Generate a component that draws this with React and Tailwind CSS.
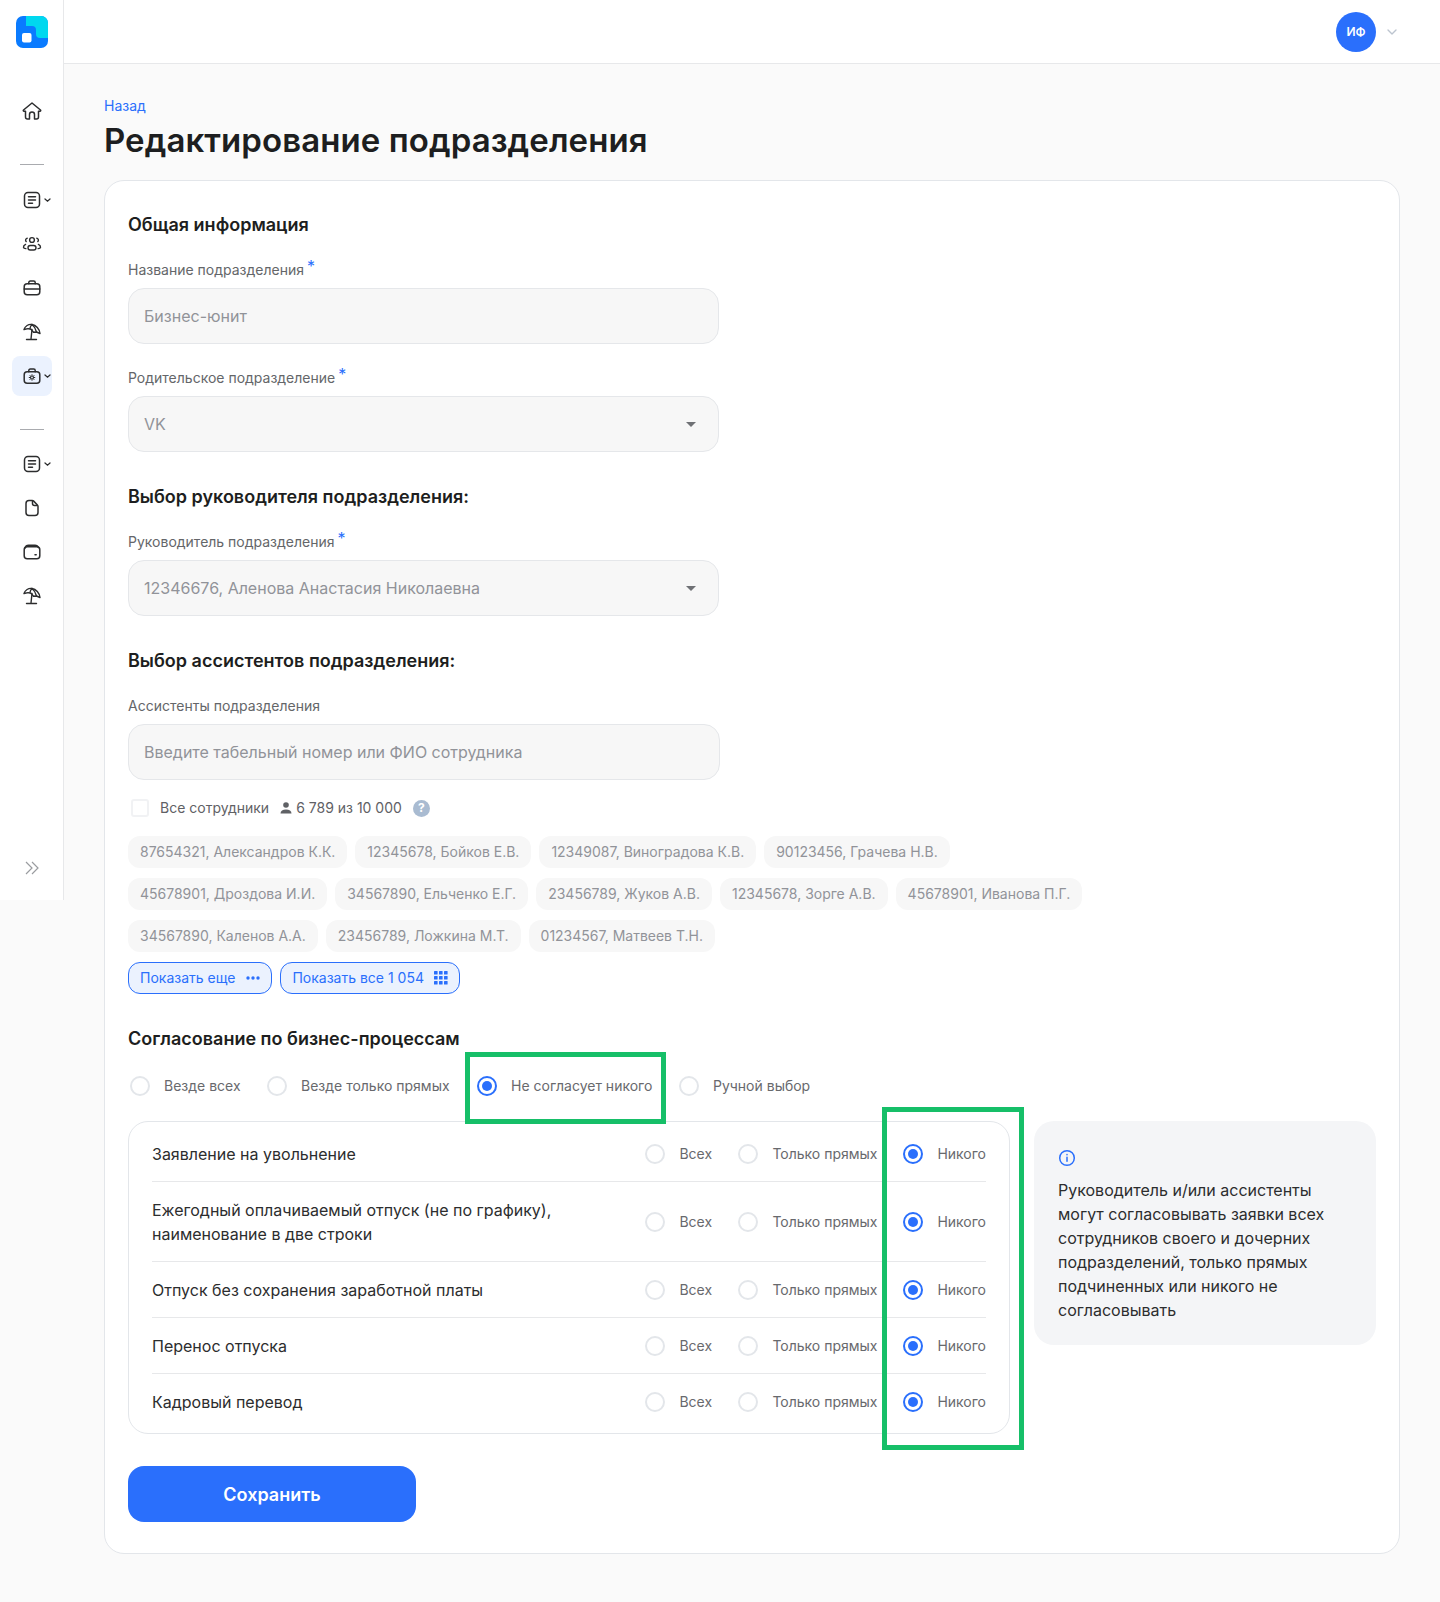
import { ChevronDown } from 'lucide-react';

const font = 'font-["Inter","Liberation_Sans",sans-serif]';

const IconHome = () => (
  <svg width="20" height="20" viewBox="0 0 20 20" fill="none" stroke="#2c2d2e" strokeWidth="1.5" strokeLinejoin="round">
    <path d="M10 2 18.500 9c.5.5.2 1.300-.5 1.300h-1.500V16a2 2 0 0 1-2 2h-2v-4.500a2.500 2.500 0 0 0-5 0V18h-2a2 2 0 0 1-2-2v-5.700H2c-.7 0-1-.8-.5-1.300z" />
  </svg>
);

const IconDoc = () => (
  <svg width="18" height="18" viewBox="0 0 18 18" fill="none" stroke="#2c2d2e" strokeWidth="1.5" strokeLinecap="round">
    <rect x="1.5" y="1.5" width="15" height="15" rx="3.5" />
    <path d="M5.5 5.8h7M5.5 9h7M5.5 12.2h4" />
  </svg>
);

const IconPeople = () => (
  <svg width="20" height="18" viewBox="0 0 20 18" fill="none" stroke="#2c2d2e" strokeWidth="1.4" strokeLinecap="round">
    <circle cx="10" cy="5" r="2.4" />
    <rect x="6" y="10.5" width="8" height="4.5" rx="2.25" />
    <path d="M5.2 3.2a2 2 0 0 0-1 3.4M14.8 3.2a2 2 0 0 1 1 3.4M3.6 9.4C2.2 10 1.4 11 1.5 12.3c.1.8.9 1.2 2.4 1.3M16.4 9.4c1.4.6 2.2 1.6 2.1 2.9-.1.8-.9 1.2-2.4 1.3" />
  </svg>
);

const IconCase = () => (
  <svg width="18" height="18" viewBox="0 0 18 18" fill="none" stroke="#2c2d2e" strokeWidth="1.5" strokeLinecap="round">
    <rect x="1.2" y="4.8" width="15.6" height="11" rx="3" />
    <path d="M5.8 4.8V3.6c0-.9.6-1.6 1.5-1.6h3.4c.9 0 1.5.7 1.5 1.6v1.2M1.2 10h15.6" />
  </svg>
);

const IconUmbrella = () => (
  <svg width="18" height="18" viewBox="0 0 18 18" fill="none" stroke="#2c2d2e" strokeWidth="1.4" strokeLinecap="round" strokeLinejoin="round">
    <path d="M1 6.500C2 3 5.500 1 9 1.500c4 .6 7.500 4.500 8 9l-3.500-1.500-3 .2-2.500-3-3-.6z" />
    <path d="M9 1.500C7.500 3 7 4.500 7 5.600M9 1.500c2.500 2 4 5 4.500 7.500M9 6.500 8 16M3.500 16.500h10" />
  </svg>
);

const IconMedCase = () => (
  <svg width="18" height="18" viewBox="0 0 18 18" fill="none" stroke="#2c2d2e" strokeWidth="1.5" strokeLinecap="round">
    <rect x="1.2" y="4.8" width="15.6" height="11.4" rx="3" />
    <path d="M5.800 4.800V3.600c0-.9.6-1.600 1.500-1.600h3.400c.9 0 1.500.7 1.500 1.600v1.200" />
    <circle cx="9" cy="10.500" r="1.500" strokeWidth="1.200" />
    <path d="M9 7.700v.6M9 12.700v.6M6.200 10.500h.6M11.200 10.500h.6M7 8.500l.4.4M10.600 12.100l.4.4M11 8.500l-.4.4M7.400 12.100l-.4.4" strokeWidth="1" />
  </svg>
);

const IconFile = () => (
  <svg width="18" height="18" viewBox="0 0 18 18" fill="none" stroke="#2c2d2e" strokeWidth="1.5" strokeLinejoin="round">
    <path d="M3 4.500C3 2.800 4.200 1.500 6 1.500h3.200c.6 0 1.100.2 1.500.6l3.700 3.800c.4.4.6.9.6 1.500v6.100c0 1.700-1.200 3-3 3H6c-1.800 0-3-1.300-3-3z" />
    <path d="M9.500 1.800v2.700c0 1.200.8 2 2 2h2.600" />
  </svg>
);

const IconWallet = () => (
  <svg width="18" height="18" viewBox="0 0 18 18" fill="none" stroke="#2c2d2e" strokeWidth="1.5" strokeLinecap="round">
    <rect x="1.200" y="3.800" width="15.600" height="12" rx="3" />
    <path d="M2 5c.5-1.800 1.800-2.800 3.500-2.800h6.500c1.800 0 3 1 3.500 2.400M12 11.800h1.200" />
  </svg>
);

function NavItem({ children, caret, active }) {
  return (
    <div className={`relative flex h-10 w-10 items-center justify-center rounded-lg ${active ? 'bg-[#ebf2fe]' : ''}`}>
      {children}
      {caret && (
        <svg className="absolute right-[1px] top-[17.500px]" width="7" height="5" viewBox="0 0 7 5" fill="none" stroke="#2c2d2e" strokeWidth="1.300" strokeLinecap="round">
          <path d="M1 1l2.500 2.200L6 1" />
        </svg>
      )}
    </div>
  );
}

function Sidebar() {
  return (
    <aside className="flex h-[900px] w-[64px] shrink-0 flex-col items-center border-r border-[#e7e8ea] bg-white">
      <svg className="mt-4" width="32" height="32" viewBox="0 0 32 32">
        <rect width="32" height="32" rx="7" fill="#0a7bff" />
        <path d="M10 0h15a7 7 0 0 1 7 7v15h-8a4 4 0 0 1-4-4v-4a4 4 0 0 0-4-4h-6z" fill="#00d8ef" />
        <rect x="6" y="17" width="9.500" height="9.500" rx="2" fill="#fff" />
      </svg>
      <div className="mt-[43px]">
        <NavItem><IconHome /></NavItem>
      </div>
      <div className="mb-[15px] mt-[33px] h-px w-6 bg-[#a9abaf]" />
      <div className="flex flex-col gap-1">
        <NavItem caret><IconDoc /></NavItem>
        <NavItem><IconPeople /></NavItem>
        <NavItem><IconCase /></NavItem>
        <NavItem><IconUmbrella /></NavItem>
        <NavItem caret active><IconMedCase /></NavItem>
      </div>
      <div className="mb-[14px] mt-[33px] h-px w-6 bg-[#a9abaf]" />
      <div className="flex flex-col gap-1">
        <NavItem caret><IconDoc /></NavItem>
        <NavItem><IconFile /></NavItem>
        <NavItem><IconWallet /></NavItem>
        <NavItem><IconUmbrella /></NavItem>
      </div>
      <svg className="mb-[25px] mt-auto" width="14" height="14" viewBox="0 0 14 14" fill="none" stroke="#9a9ca0" strokeWidth="1.200">
        <path d="M1 1l6 6-6 6M7 1l6 6-6 6" />
      </svg>
    </aside>
  );
}

function Star() {
  return <span className="absolute -right-[11px] -top-[3px] text-base leading-none text-[#2a6ffc]">*</span>;
}

function FieldLabel({ children, required }) {
  return (
    <div className="mb-[9px] text-sm leading-[18px] text-[#646669]">
      <span className="relative">
        {children}
        {required && <Star />}
      </span>
    </div>
  );
}

function Field({ value, select, width = 'w-[591px]' }) {
  return (
    <div className={`flex h-14 ${width} items-center justify-between rounded-2xl border border-[#e5e7ea] bg-[#f7f7f7] pl-[15px] pr-[22px] text-base text-[#919399]`}>
      <span>{value}</span>
      {select && <div className="h-0 w-0 border-x-[5px] border-t-[5px] border-x-transparent border-t-[#6f7175]" />}
    </div>
  );
}

function Radio({ on }) {
  if (on) {
    return (
      <span className="flex h-5 w-5 shrink-0 items-center justify-center rounded-full border-2 border-[#2a6ffc] bg-white">
        <span className="h-[10px] w-[10px] rounded-full bg-[#2a6ffc]" />
      </span>
    );
  }
  return <span className="h-5 w-5 shrink-0 rounded-full border-2 border-[#e3e6ea] bg-white" />;
}

function RadioLabel({ on, label }) {
  return (
    <label className="flex items-center gap-[14px] text-sm text-[#68696d]">
      <Radio on={on} />
      <span>{label}</span>
    </label>
  );
}

function Chip({ children }) {
  return <span className="flex h-8 items-center rounded-xl bg-[#f7f7f7] px-3 text-sm text-[#919399]">{children}</span>;
}

const chipRows = [
  ['87654321, Александров К.К.', '12345678, Бойков Е.В.', '12349087, Виноградова К.В.', '90123456, Грачева Н.В.'],
  ['45678901, Дроздова И.И.', '34567890, Ельченко Е.Г.', '23456789, Жуков А.В.', '12345678, Зорге А.В.', '45678901, Иванова П.Г.'],
  ['34567890, Каленов А.А.', '23456789, Ложкина М.Т.', '01234567, Матвеев Т.Н.'],
];

const processes = [
  { title: 'Заявление на увольнение', h: 'h-[60px] pt-[5px]' },
  { title: 'Ежегодный оплачиваемый отпуск (не по графику),\nнаименование в две строки', h: 'h-[80px]' },
  { title: 'Отпуск без сохранения заработной платы', h: 'h-[56px] pt-[1px]' },
  { title: 'Перенос отпуска', h: 'h-[56px] pt-[1px]' },
  { title: 'Кадровый перевод', h: 'h-[59px] pb-[3px]' },
];

function ProcessRow({ title, h, last }) {
  return (
    <div className={`flex ${h} items-center justify-between ${last ? '' : 'border-b border-[#e7e8ea]'}`}>
      <span className="whitespace-pre-line text-base leading-6 text-[#2c2d2e]">{title}</span>
      <div className="flex items-center">
        <div className="w-[93px]"><RadioLabel label="Всех" /></div>
        <div className="w-[165px]"><RadioLabel label="Только прямых" /></div>
        <RadioLabel on label="Никого" />
      </div>
    </div>
  );
}

function Heading({ children, className = '' }) {
  return <h2 className={`text-lg font-semibold leading-6 text-[#1d1e20] ${className}`}>{children}</h2>;
}

export default function App() {
  return (
    <div className={`flex min-h-[1602px] w-[1440px] items-start bg-[#fafafa] ${font}`}>
      <Sidebar />
      <div className="min-w-0 flex-1">
        <header className="flex h-16 items-center justify-end border-b border-[#e7e8ea] bg-white pr-10">
          <div className="flex h-10 w-10 items-center justify-center rounded-full bg-[#2a6ffc] text-xs font-semibold text-white">ИФ</div>
          <ChevronDown className="ml-2" size={16} color="#bcc4cf" />
        </header>

        <main className="px-10 pb-12">
          <a className="mt-[33px] block text-sm leading-[18px] text-[#2a6ffc]">Назад</a>
          <h1 className="mt-[3px] text-[33px] font-semibold leading-[44px] tracking-[0.08px] text-[#1d1e20]">Редактирование подразделения</h1>

          <section className="relative mt-[18px] h-[1374px] rounded-[20px] border border-[#e3e6ea] bg-white px-[23px] pt-[32px]">
            <Heading>Общая информация</Heading>
            <div className="mt-[24px]">
              <FieldLabel required>Название подразделения</FieldLabel>
              <Field value="Бизнес-юнит" />
            </div>
            <div className="mt-[25px]">
              <FieldLabel required>Родительское подразделение</FieldLabel>
              <Field value="VK" select />
            </div>

            <Heading className="mt-[33px]">Выбор руководителя подразделения:</Heading>
            <div className="mt-[24px]">
              <FieldLabel required>Руководитель подразделения</FieldLabel>
              <Field value="12346676, Аленова Анастасия Николаевна" select />
            </div>

            <Heading className="mt-[33px]">Выбор ассистентов подразделения:</Heading>
            <div className="mt-[24px]">
              <FieldLabel>Ассистенты подразделения</FieldLabel>
              <Field value="Введите табельный номер или ФИО сотрудника" width="w-[592px]" />
            </div>

            <div className="mt-[19px] flex h-[18px] items-center pl-[3px] text-sm text-[#5f6165]">
              <span className="h-[18px] w-[18px] rounded-[3px] border-2 border-[#f1f2f4] bg-white" />
              <span className="ml-[11px]">Все сотрудники</span>
              <svg className="ml-[10px]" width="14" height="14" viewBox="0 0 14 14" fill="#5f6165">
                <circle cx="7" cy="4" r="2.800" />
                <path d="M1.500 12.500c0-2.500 2.200-4 5.500-4s5.500 1.500 5.500 4z" />
              </svg>
              <span className="ml-[3px]">6 789 из 10 000</span>
              <span className="ml-[11px] flex h-[17px] w-[17px] items-center justify-center rounded-full bg-[#a9bbd1] text-xs font-bold text-white">?</span>
            </div>

            <div className="mt-[19px] flex flex-col gap-[10px]">
              {chipRows.map((row, i) => (
                <div key={i} className="flex gap-2">
                  {row.map((c, j) => <Chip key={j}>{c}</Chip>)}
                </div>
              ))}
              <div className="flex gap-2">
                <button className="flex h-8 items-center gap-[11px] rounded-xl border border-[#2a6ffc] bg-[#ebf2fe] px-[11px] text-sm text-[#2a6ffc]">
                  Показать еще
                  <svg width="14" height="4" viewBox="0 0 14 4" fill="#2a6ffc"><circle cx="2" cy="2" r="1.700" /><circle cx="7" cy="2" r="1.700" /><circle cx="12" cy="2" r="1.700" /></svg>
                </button>
                <button className="flex h-8 items-center gap-[10px] rounded-xl border border-[#2a6ffc] bg-[#ebf2fe] px-[11px] text-sm text-[#2a6ffc]">
                  Показать все 1 054
                  <svg width="14" height="14" viewBox="0 0 14 14" fill="#2a6ffc">
                    {[0, 5, 10].map((y) => [0, 5, 10].map((x) => <rect key={`${x}${y}`} x={x} y={y} width="3.600" height="3.600" rx="0.600" />))}
                  </svg>
                </button>
              </div>
            </div>

            <Heading className="mt-[33px]">Согласование по бизнес-процессам</Heading>
            <div className="mt-[25px] flex h-5 items-center pl-[2px]">
              <div className="w-[137px]"><RadioLabel label="Везде всех" /></div>
              <div className="w-[210px]"><RadioLabel label="Везде только прямых" /></div>
              <div className="w-[202px]"><RadioLabel on label="Не согласует никого" /></div>
              <RadioLabel label="Ручной выбор" />
            </div>

            <div className="mt-[25px] flex items-start gap-6">
              <div className="w-[882px] rounded-[20px] border border-[#e3e6ea] pl-[23px] pr-[23px]">
                {processes.map((p, i) => (
                  <ProcessRow key={p.title} title={p.title} h={p.h} last={i === processes.length - 1} />
                ))}
              </div>
              <aside className="h-[224px] w-[342px] rounded-[20px] bg-[#f4f5f7] px-6 pt-[27px] text-base leading-6 text-[#2c2d2e]">
                <svg width="20" height="20" viewBox="0 0 20 20" fill="none" stroke="#2a6ffc" strokeWidth="1.500" strokeLinecap="round" className="-ml-px">
                  <circle cx="10" cy="10" r="7.300" />
                  <path d="M10 9.200v4M10 6.600v.1" />
                </svg>
                <p className="mt-[10px]">Руководитель и/или ассистенты могут согласовывать заявки всех сотрудников своего и дочерних подразделений, только прямых подчиненных или никого не согласовывать</p>
              </aside>
            </div>

            <button className="mt-[32px] h-14 w-[288px] rounded-2xl bg-[#2a6ffc] pt-px text-lg font-semibold text-white">Сохранить</button>

            {/* green annotation frames on top of the form */}
            <div className="absolute left-[360px] top-[871px] h-[72px] w-[201px] border-[5px] border-[#16bf68]" />
            <div className="absolute left-[777px] top-[926px] h-[343px] w-[142px] border-[5px] border-[#16bf68]" />
          </section>
        </main>
      </div>
    </div>
  );
}
